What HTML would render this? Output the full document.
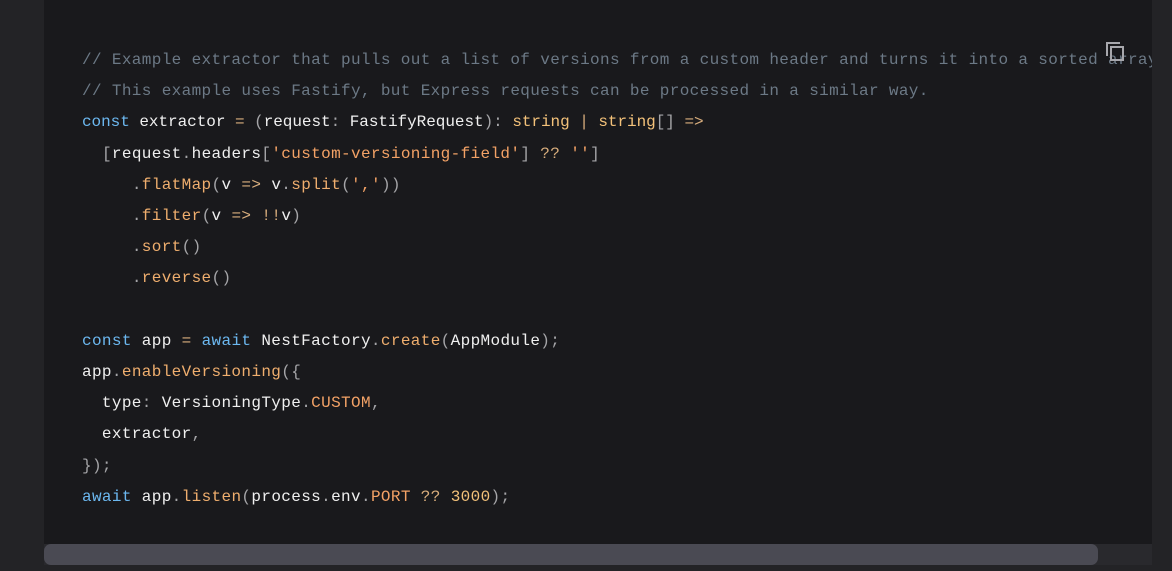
<!DOCTYPE html>
<html><head><meta charset="utf-8"><style>
html,body{margin:0;padding:0;width:1172px;height:571px;overflow:hidden;background:#232326;}
.blk{position:absolute;left:44px;top:0;width:1108px;height:544px;background:#19191c;overflow:hidden;}
pre{position:absolute;left:38px;top:45px;margin:0;font-family:"Liberation Mono",monospace;font-size:16px;line-height:31.2px;color:#f0f0f0;white-space:pre;letter-spacing:0.36px;}
.c{color:#6c7986}.k{color:#6cb8f0}.p{color:#a5a5a8}.f{color:#efae6e}.s{color:#f3a266}.t{color:#f4c27a}.o{color:#d9ae7d}
.n{letter-spacing:-0.04px}
.sb{position:absolute;left:44px;top:544px;width:1108px;height:21px;background:#29292d;}
.th{position:absolute;left:0;top:0;width:1054px;height:21px;background:#4a4a53;border-radius:7px;}
.cp{position:absolute;top:42px;}
</style></head><body>
<div class="blk"><pre><span class="c">// Example extractor that pulls out a list of versions from a custom header and turns it into a sorted array.</span>
<span class="c">// This example uses Fastify, but Express requests can be processed in a similar way.</span>
<span class="n"><span class="k">const</span> extractor <span class="o">=</span> <span class="p">(</span>request<span class="p">:</span> FastifyRequest<span class="p">):</span> <span class="t">string</span> <span class="o">|</span> <span class="t">string</span><span class="p">[]</span> <span class="o">=&gt;</span></span>
  <span class="p">[</span>request<span class="p">.</span>headers<span class="p">[</span><span class="s">'custom-versioning-field'</span><span class="p">]</span> <span class="o">??</span> <span class="s">''</span><span class="p">]</span>
     <span class="p">.</span><span class="f">flatMap</span><span class="p">(</span>v <span class="o">=&gt;</span> v<span class="p">.</span><span class="f">split</span><span class="p">(</span><span class="s">','</span><span class="p">))</span>
     <span class="p">.</span><span class="f">filter</span><span class="p">(</span>v <span class="o">=&gt;</span> <span class="o">!!</span>v<span class="p">)</span>
     <span class="p">.</span><span class="f">sort</span><span class="p">()</span>
     <span class="p">.</span><span class="f">reverse</span><span class="p">()</span>

<span class="k">const</span> app <span class="o">=</span> <span class="k">await</span> NestFactory<span class="p">.</span><span class="f">create</span><span class="p">(</span>AppModule<span class="p">);</span>
app<span class="p">.</span><span class="f">enableVersioning</span><span class="p">({</span>
  type<span class="p">:</span> VersioningType<span class="p">.</span><span class="s">CUSTOM</span><span class="p">,</span>
  extractor<span class="p">,</span>
<span class="p">});</span>
<span class="k">await</span> app<span class="p">.</span><span class="f">listen</span><span class="p">(</span>process<span class="p">.</span>env<span class="p">.</span><span class="s">PORT</span> <span class="o">??</span> <span class="t">3000</span><span class="p">);</span></pre>
<svg class="cp" style="left:1062px" width="20" height="20" viewBox="0 0 20 20" fill="none" stroke="#a8a8ad" stroke-width="2"><path d="M1 14V1h13"/><rect x="5" y="5" width="12" height="13"/></svg>
</div>
<div class="sb"><div class="th"></div></div>
</body></html>
